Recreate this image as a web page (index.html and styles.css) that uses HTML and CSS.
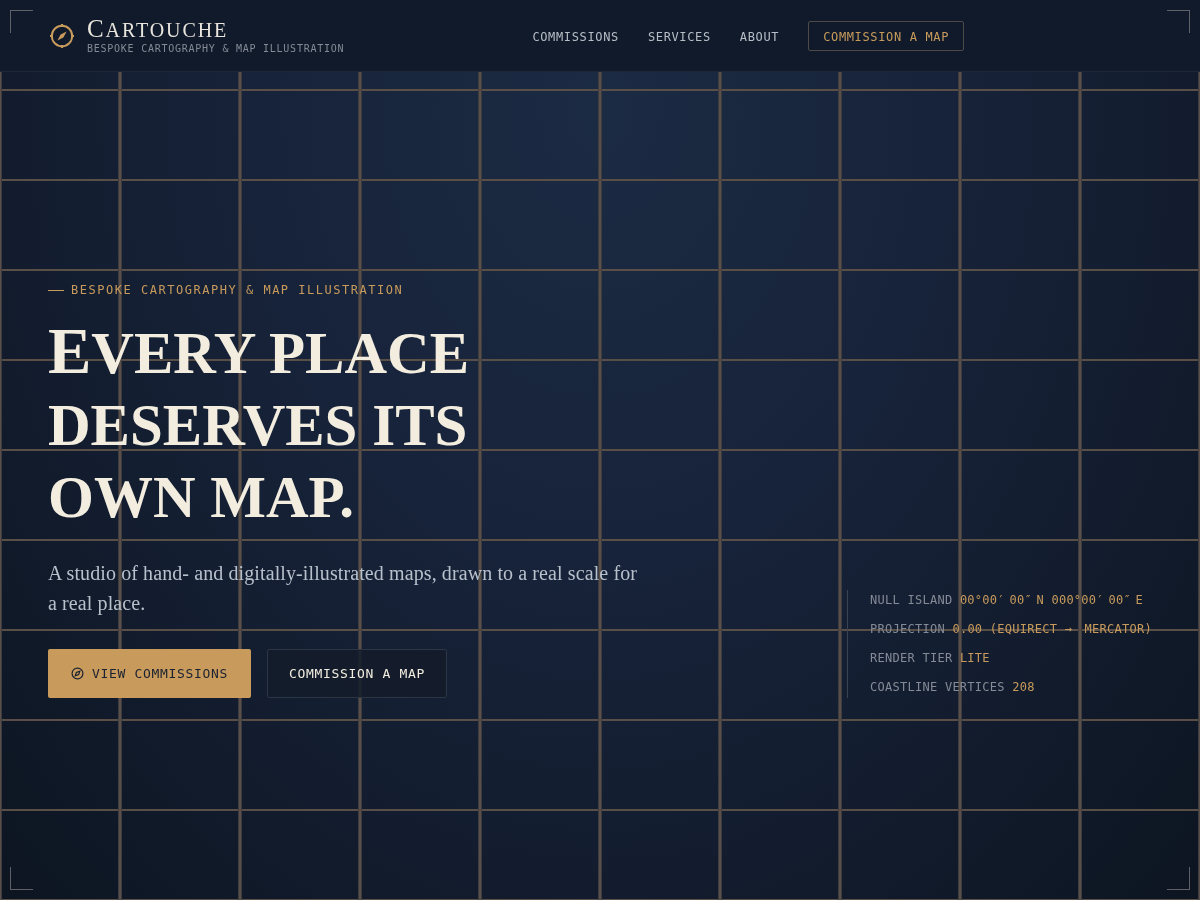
FILE: index.html
```html
<!DOCTYPE html>
<html lang="en">
<head>
    <meta charset="UTF-8">
    <meta name="viewport" content="width=device-width, initial-scale=1.0">
    <title>Cartouche</title>
    <link rel="stylesheet" href="styles.css">
</head>
<body>
    <div class="graticule"></div>
    <div class="corner corner-tl"></div>
    <div class="corner corner-tr"></div>
    <div class="corner corner-bl"></div>
    <div class="corner corner-br"></div>

    <header class="site-header">
        <a class="brand" href="#">
            <svg class="brand-icon" viewBox="0 0 24 24" width="24" height="24" fill="none" stroke="#c89b5c" stroke-width="1.9">
                <circle cx="12" cy="12" r="10.2"/>
                <path d="M12 0v3M12 21v3M0 12h3M21 12h3" stroke-width="2.2"/>
                <path d="M16.6 7.4L13.4 13.4L7.4 16.6L10.6 10.6Z" fill="#c89b5c" stroke="none"/>
            </svg>
            <span class="brand-text">
                <span class="brand-name">Cartouche</span>
                <span class="brand-tag">BESPOKE CARTOGRAPHY &amp; MAP ILLUSTRATION</span>
            </span>
        </a>
        <nav class="site-nav">
            <a href="#">COMMISSIONS</a>
            <a href="#">SERVICES</a>
            <a href="#">ABOUT</a>
            <a class="nav-cta" href="#">COMMISSION A MAP</a>
        </nav>
    </header>

    <main class="hero">
        <div class="hero-copy">
            <p class="eyebrow">BESPOKE CARTOGRAPHY &amp; MAP ILLUSTRATION</p>
            <h1>Every place deserves its own map.</h1>
            <p class="lede">A studio of hand- and digitally-illustrated maps, drawn to a real scale for a real place.</p>
            <div class="hero-actions">
                <a class="btn btn-primary" href="#">
                    <svg viewBox="0 0 24 24" width="13" height="13" fill="none" stroke="currentColor" stroke-width="2.2">
                        <circle cx="12" cy="12" r="10"/>
                        <path d="M16.2 7.8L14.1 14.1L7.8 16.2L9.9 9.9Z"/>
                    </svg>
                    VIEW COMMISSIONS
                </a>
                <a class="btn btn-ghost" href="#">COMMISSION A MAP</a>
            </div>
        </div>
        <aside class="readout">
            <div>NULL ISLAND <span>00°00<i class="prime">′</i> 00<i class="prime">″</i> N 000°00<i class="prime">′</i> 00<i class="prime">″</i> E</span></div>
            <div>PROJECTION <span>0.00 (EQUIRECT <i class="arrow">→</i> MERCATOR)</span></div>
            <div>RENDER TIER <span>LITE</span></div>
            <div>COASTLINE VERTICES <span>208</span></div>
        </aside>
    </main>
</body>
</html>
```

FILE: styles.css
```css
html, body {
    height: 100%;
    margin: 0;
    padding: 0;
}
body {
    position: relative;
    display: flex;
    flex-direction: column;
    min-height: 100vh;
    overflow: hidden;
    font-family: "DejaVu Sans Mono", monospace;
    color: #f3ede0;
    background: radial-gradient(ellipse at 50% 12%, #1b2b43 0%, #17233a 40%, #0d1521 100%);
}
a {
    text-decoration: none;
    color: inherit;
}
.graticule {
    position: absolute;
    top: 0;
    left: 0;
    width: 100%;
    height: 100%;
    background-image:
        linear-gradient(to right, #3c3c42 1px, #5a4f47 1px, #5a4f47 3px, #3c3c42 3px, #3c3c42 4px, transparent 4px),
        linear-gradient(to bottom, #5a4f47 2px, transparent 2px);
    background-size: 120px 90px;
    background-position: -2px -1px;
}
.corner {
    position: absolute;
    width: 22px;
    height: 22px;
    z-index: 3;
    border: 0 solid #5f6068;
}
.corner-tl { top: 10px; left: 10px; border-width: 1px 0 0 1px; }
.corner-tr { top: 10px; right: 10px; border-width: 1px 1px 0 0; }
.corner-bl { bottom: 10px; left: 10px; border-width: 0 0 1px 1px; }
.corner-br { bottom: 10px; right: 10px; border-width: 0 1px 1px 0; }

.site-header {
    position: relative;
    z-index: 2;
    will-change: transform;
    display: flex;
    align-items: center;
    justify-content: space-between;
    flex-shrink: 0;
    height: 72px;
    padding: 1px 236px 0 50px;
    box-sizing: border-box;
    background: #101a2b;
    border-bottom: 1px solid #1c2738;
}
.brand {
    display: flex;
    align-items: center;
    gap: 13px;
}
.brand-text {
    display: flex;
    flex-direction: column;
}
.brand-name {
    font-family: "Liberation Serif", serif;
    font-size: 20px;
    line-height: 24px;
    letter-spacing: 1.9px;
    color: #e9e5dc;
    text-transform: uppercase;
}
.brand-name::first-letter {
    font-size: 25px;
}
.brand-tag {
    font-size: 10px;
    letter-spacing: 0.75px;
    line-height: 14px;
    color: #858b96;
}
.site-nav {
    display: flex;
    align-items: center;
    gap: 29px;
    font-size: 12px;
    letter-spacing: 0.64px;
    color: #b8bec6;
}
.site-nav a {
    padding-top: 2px;
}
.site-nav .nav-cta {
    padding: 8px 14px 6px;
    color: #c89b5c;
    border: 1px solid #4d4a48;
    border-radius: 2px;
}

.hero {
    position: relative;
    z-index: 1;
    will-change: transform;
    display: flex;
    align-items: flex-end;
    justify-content: space-between;
    padding: 211px 48px 0;
}
.hero-copy {
    width: 600px;
}
.eyebrow {
    display: flex;
    align-items: center;
    gap: 7px;
    margin: 0 0 18px;
    font-size: 12px;
    line-height: 14px;
    letter-spacing: 1.52px;
    color: #c89b5c;
}
.eyebrow::before {
    content: "";
    width: 16px;
    height: 1px;
    background: #c89b5c;
}
h1 {
    width: 480px;
    margin: 0 0 25px;
    font-family: "Liberation Serif", serif;
    font-size: 59px;
    font-weight: 700;
    line-height: 72px;
    letter-spacing: 0;
    color: #f3ede0;
    text-transform: uppercase;
}
h1::first-letter {
    font-size: 65px;
}
.lede {
    width: 596px;
    margin: 0 0 31px;
    font-family: "Liberation Serif", serif;
    font-size: 20px;
    line-height: 30px;
    letter-spacing: 0.1px;
    color: #b8c0cc;
}
.hero-actions {
    display: flex;
    gap: 16px;
}
.btn {
    display: flex;
    align-items: center;
    gap: 8px;
    height: 49px;
    box-sizing: border-box;
    padding: 0 21px;
    font-size: 13px;
    letter-spacing: 0.67px;
    border-radius: 2px;
}
.btn-primary {
    padding: 0 23px;
    background: #c89b5c;
    color: #1a2130;
}
.btn-ghost {
    background: rgba(20, 28, 42, 0.85);
    border: 1px solid #2c3544;
    color: #f3ede0;
}
.readout {
    display: flex;
    flex-direction: column;
    justify-content: center;
    gap: 13.7px;
    box-sizing: border-box;
    height: 108px;
    padding-left: 22px;
    border-left: 1px solid #3b4350;
    font-size: 12px;
    line-height: 15px;
    letter-spacing: 0.27px;
    color: #858b96;
    white-space: nowrap;
}
.readout span {
    color: #c89b5c;
}
.prime {
    font-style: normal;
    letter-spacing: -2.7px;
}
.arrow {
    font-style: normal;
    letter-spacing: 5px;
}
```
